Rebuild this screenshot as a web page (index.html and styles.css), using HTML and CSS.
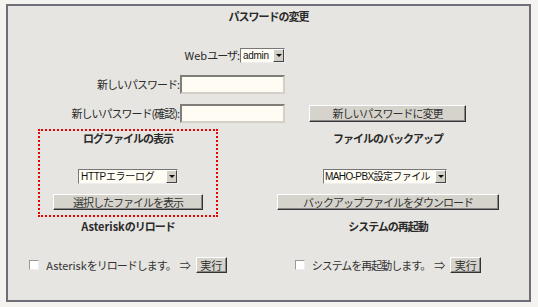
FILE: index.html
```html
<html>
<head>
<meta charset="utf-8">
<link rel="stylesheet" href="styles.css">
</head>
<body>
<div class="panel">
<div class="title">パスワードの変更</div>

<div class="pw">
<div class="pw-row">
<div class="pw-field"><span class="en">Web</span>ユーザ:<span class="pick pick-user"><select><option>admin</option></select><span class="arrow"></span></span></div>
</div>
<div class="pw-row">
<div class="pw-field">新しいパスワード:<input type="password" class="txt"></div>
</div>
<div class="pw-row">
<div class="pw-field">新しいパスワード(確認):<input type="password" class="txt"></div>
<div class="pw-side"><button class="btn btn-pw">新しいパスワードに変更</button></div>
</div>
</div>

<div class="tools">
<div class="cell cell-log">
<div class="head">ログファイルの表示</div>
<span class="pick pick-log"><select><option>HTTPエラーログ</option></select><span class="arrow"></span></span>
<button class="btn btn-log">選択したファイルを表示</button>
</div>
<div class="cell">
<div class="head">ファイルのバックアップ</div>
<span class="pick pick-bak"><select><option>MAHO-PBX設定ファイル</option></select><span class="arrow"></span></span>
<button class="btn btn-bak">バックアップファイルをダウンロード</button>
</div>

<div class="head"><span class="en">Asterisk</span>のリロード</div>
<div class="head">システムの再起動</div>

<div class="act"><input type="checkbox" class="chk"><span class="en">Asterisk</span>をリロードします。<span class="to">⇒</span><button class="btn btn-run">実行</button></div>
<div class="act"><input type="checkbox" class="chk">システムを再起動します。<span class="to">⇒</span><button class="btn btn-run">実行</button></div>
</div>
</div>
</body>
</html>
```

FILE: styles.css
```css
body{
margin:0; background-color:#f4f3ef; color:#2a2a2a; font-family:"Noto Sans CJK JP", sans-serif; font-size:11px; letter-spacing:-1px;
}
.en{
letter-spacing:0;
}
.panel{
width:521px; height:294px; margin:4px 0 0 6px; border:2px solid #6e6e76; background-color:#e6e5e1;
}
.title{
height:20px; line-height:20px; text-align:center; font-weight:bold;
}

/* password */
.pw-row{
display:flex; height:20px; align-items:center; margin-top:9px;
}
.pw-row:first-child{
margin-top:19px;
}
.pw-field{
width:277px; display:flex; justify-content:flex-end; align-items:center; white-space:nowrap;
}
.pw-side{
padding-left:24px;
}
.txt{
width:105px; height:19px; box-sizing:border-box; margin:0 0 0 1px; background-color:#fffdf3; border:2px inset #d4d0c8; outline:none;
}

/* select look-alike */
.pick{
display:inline-flex; flex:none; height:15px; box-sizing:border-box; border:1px solid #777; border-right-color:#eee; border-bottom-color:#eee; background-color:#fffdf3;
}
.pick select{
flex:1; min-width:0; -webkit-appearance:none; appearance:none; border:none; background:transparent; padding:0 0 0 2px; font-family:"Liberation Sans", "Noto Sans CJK JP", sans-serif; font-size:10px; letter-spacing:-0.3px; color:#111; outline:none; height:13px; line-height:13px;
}
.pick-bak select{
letter-spacing:-0.6px; padding-left:1px;
}
.arrow{
width:11px; background-color:#d4d0c8; border:1px solid; border-color:#fff #444 #444 #fff; box-sizing:border-box; display:flex; align-items:center; justify-content:center;
}
.arrow::before{
content:""; border-left:3px solid transparent; border-right:3px solid transparent; border-top:3px solid #111;
}
.pick-user{
width:45px; margin-left:1px;
}
.pick-log{
width:100px;
}
.pick-bak{
width:124px; margin-left:-6px;
}

/* buttons */
.btn{
flex:none; background-color:#d6d3cc; color:#333; font-family:inherit; font-size:11px; letter-spacing:-1px; padding:0; border:1px solid; border-color:#fff #333 #333 #fff; box-shadow:inset -1px -1px #888; height:17px; line-height:13px;
}
.btn-pw{
width:157px;
}
.btn-log{
width:150px; height:16px; margin-top:10px;
}
.btn-bak{
width:222px; height:16px; margin-top:10px;
}
.btn-run{
width:31px; height:16px; margin-left:5px; letter-spacing:0;
}

/* lower grid */
.tools{
display:grid; grid-template-columns:180px 222px; column-gap:59px; margin:6px 0 0 30px;
}
.cell{
height:88px; box-sizing:border-box; border:2px dotted transparent; padding-bottom:5px; display:flex; flex-direction:column; align-items:center;
}
.cell-log{
border-color:#e00;
}
.cell .pick{
margin-top:24px;
}
.head{
height:14px; line-height:14px; text-align:center; font-weight:bold; margin-top:2px;
}
.cell .head{
margin-top:0;
}
.act{
display:flex; align-items:center; justify-content:center; height:16px; margin-top:24px; color:#333; white-space:nowrap;
}
.chk{
-webkit-appearance:none; appearance:none; flex:none; width:10px; height:10px; margin:0 7px 0 0; border:1px solid; border-color:#999 #eee #eee #999; background-color:#fff;
}
.to{
margin-left:4px; letter-spacing:0;
}
```
